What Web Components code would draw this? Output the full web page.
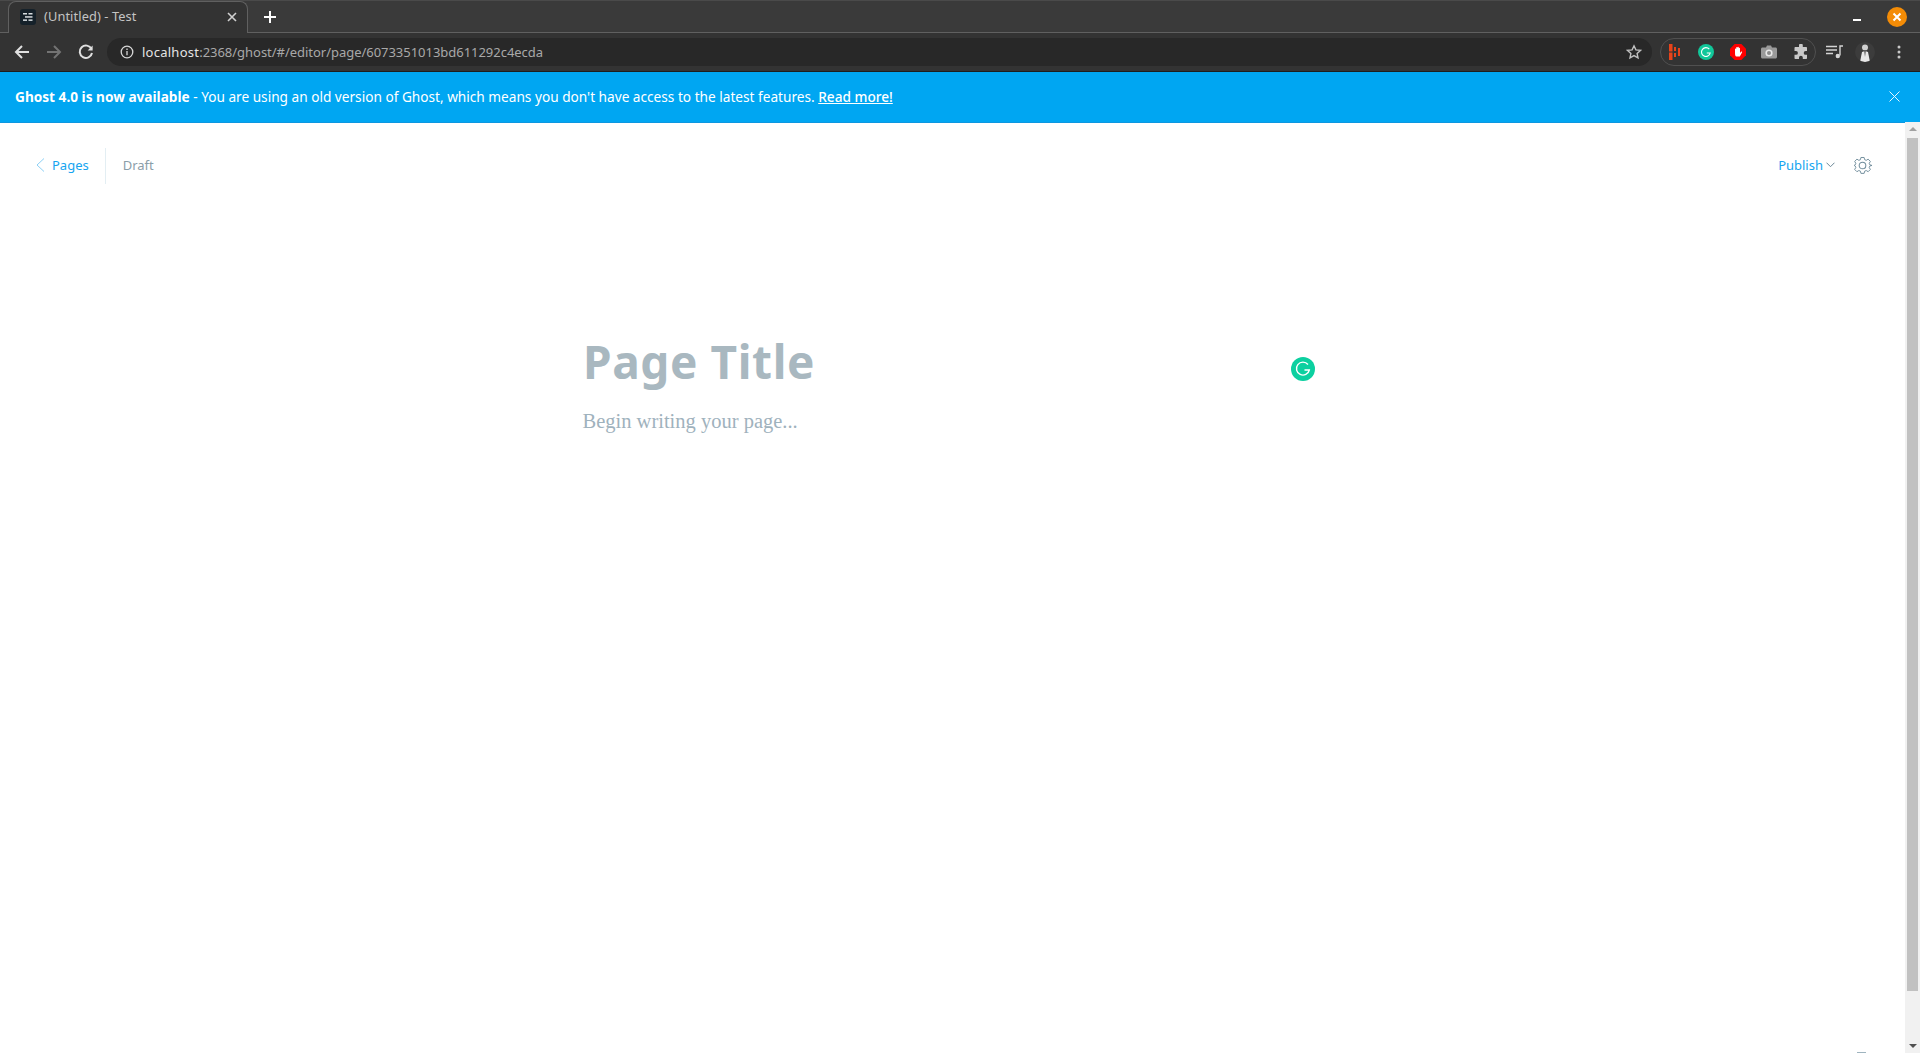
<!DOCTYPE html>
<html>
<head>
<meta charset="utf-8">
<title>(Untitled) - Test</title>
<style>
    html, body { margin: 0; height: 100%; overflow: hidden; background: #fff; }
    body { display: flex; flex-direction: column; height: 1053px; font-family: "Noto Sans", "Open Sans", sans-serif; }
    page-area { flex: 1; min-height: 0; }
</style>
</head>
<body>
<browser-tabs title-text="(Untitled) - Test"></browser-tabs>
<browser-toolbar></browser-toolbar>
<upgrade-banner>
    <strong>Ghost 4.0 is now available</strong><span> - You are using an old version of Ghost, which means you don't have access to the latest features. </span><a>Read more!</a>
</upgrade-banner>
<page-area>
    <editor-header></editor-header>
    <editor-canvas heading="Page Title" placeholder="Begin writing your page..."></editor-canvas>
</page-area>
<grammarly-badge></grammarly-badge>

<script>
class BrowserTabs extends HTMLElement {
    constructor() {
        super();
        this.attachShadow({mode: 'open'});
        this.shadowRoot.innerHTML = `
            <style>
                :host { display: flex; height: 32px; background: #3a3a3a; border-top: 1px solid #4a4a4a; color: #fff; position: relative; }
                .line { position: absolute; left: 0; right: 0; bottom: 0; height: 1px; background: #606060; }
                .tab { position: relative; z-index: 1; margin-left: 8px; width: 240px; height: 32px; box-sizing: border-box; background: #333; border: 1px solid #606060; border-bottom: none; border-radius: 8px 8px 0 0; display: flex; align-items: center; padding: 0 10px 1px 11px; gap: 8px; }
                .fav { width: 16px; height: 16px; border-radius: 3px; background: #15212a; display: grid; place-items: center; flex: none; }
                .label { flex: 1; font: 12.8px "Noto Sans", sans-serif; letter-spacing: .1px; color: #c4c4c4; white-space: nowrap; margin-top: -2px; }
                .plus { margin-left: 10px; width: 24px; height: 32px; display: grid; place-items: center; }
                .space { flex: 1; }
                .min { width: 8px; height: 2px; background: #fff; align-self: center; margin: 5px 26px 0 0; }
                .close { width: 20px; height: 20px; border-radius: 50%; background: #f48c06; align-self: center; margin-right: 13px; display: grid; place-items: center; }
            </style>
            <div class="line"></div>
            <div class="tab">
                <span class="fav"><svg width="10" height="10" viewBox="0 0 10 10" fill="#d8dde0"><rect y="1" width="4" height="1.5"/><rect x="5.5" y="1" width="4" height="1.5"/><rect x="2" y="4.2" width="7.5" height="1.5"/><rect y="7.4" width="4" height="1.5"/><rect x="5.5" y="7.4" width="4" height="1.5"/></svg></span>
                <span class="label"></span>
                <svg width="10" height="10" viewBox="0 0 10 10" stroke="#d0d0d0" stroke-width="1.6"><path d="M1 1l8 8M9 1l-8 8"/></svg>
            </div>
            <div class="plus"><svg width="12" height="12" viewBox="0 0 12 12" stroke="#fff" stroke-width="2"><path d="M6 0v12M0 6h12"/></svg></div>
            <div class="space"></div>
            <div class="min"></div>
            <div class="close"><svg width="10" height="10" viewBox="0 0 10 10" stroke="#fff" stroke-width="2"><path d="M1.5 1.5l7 7M8.5 1.5l-7 7"/></svg></div>
        `;
    }

    connectedCallback() {
        this.shadowRoot.querySelector('.label').textContent = this.getAttribute('title-text');
    }
}
customElements.define('browser-tabs', BrowserTabs);

class BrowserToolbar extends HTMLElement {
    constructor() {
        super();
        this.attachShadow({mode: 'open'});
        this.shadowRoot.innerHTML = `
            <style>
                :host { display: flex; align-items: center; height: 38px; background: #333; border-bottom: 1px solid #1e1e1e; padding-left: 13px; }
                .nav { display: flex; gap: 14px; align-items: center; }
                .nav svg { display: block; }
                .url { margin-left: 12px; width: 1545px; height: 28px; border-radius: 14px; background: #282828; display: flex; align-items: center; padding-left: 13px; box-sizing: border-box; font: 13px "Noto Sans", sans-serif; color: #a8a8a8; white-space: nowrap; }
                .url b { font-weight: 400; color: #e4e4e4; margin-left: 8px; letter-spacing: .25px; }
                .url span { letter-spacing: -.03px; }
                .star { margin-left: auto; margin-right: 10px; display: block; }
                .pill { margin-left: 8px; width: 156px; height: 28px; box-sizing: border-box; border: 1px solid #505050; border-radius: 14px; display: flex; align-items: center; justify-content: space-between; padding: 0 6px 0 7px; flex: none; }
                .pill svg { display: block; }
                .rest { display: flex; align-items: center; margin-left: 10px; }
                .avatar { width: 20px; height: 20px; border-radius: 50%; background: #3c3c3c; margin-left: 12px; overflow: hidden; display: block; }
                .dots { margin-left: 22px; display: block; }
            </style>
            <div class="nav">
                <svg width="18" height="18" viewBox="0 0 18 18" fill="none" stroke="#e0e0e0" stroke-width="2"><path d="M16 9H3M9 3L3 9l6 6"/></svg>
                <svg width="18" height="18" viewBox="0 0 18 18" fill="none" stroke="#737373" stroke-width="2"><path d="M2 9h13M9 3l6 6-6 6"/></svg>
                <svg width="18" height="18" viewBox="0 0 18 18" fill="none" stroke="#e0e0e0" stroke-width="2"><path d="M14.5 6A6.2 6.2 0 1 0 15 10"/><path d="M15.6 2.4v5h-5" fill="#e0e0e0" stroke="none"/></svg>
            </div>
            <div class="url">
                <svg width="14" height="14" viewBox="0 0 14 14" fill="none" stroke="#d8d8d8" stroke-width="1.3"><circle cx="7" cy="7" r="5.8"/><path d="M7 6v4.2M7 3.6v1.4"/></svg>
                <b>localhost</b><span>:2368/ghost/#/editor/page/6073351013bd611292c4ecda</span>
                <svg class="star" width="16" height="16" viewBox="0 0 16 16" fill="none" stroke="#c0c0c0" stroke-width="1.4"><path d="M8 1.8l1.9 4.1 4.5.5-3.3 3 .9 4.4L8 11.6l-4 2.2.9-4.4-3.3-3 4.5-.5z"/></svg>
            </div>
            <div class="pill">
                <svg width="14" height="16" viewBox="0 0 14 16" fill="#e8431a"><rect x="1" y="0" width="3.500" height="7.500"/><rect x="1" y="8.500" width="3.500" height="7.500"/><rect x="6" y="3" width="2" height="4"/><rect x="6" y="9" width="2" height="4"/><rect x="10" y="4" width="2" height="8"/></svg>
                <svg width="16" height="16" viewBox="0 0 16 16"><circle cx="8" cy="8" r="8" fill="#11c79a"/><path d="M11.3 5.2A4.4 4.4 0 1 0 12.2 9H8.8" fill="none" stroke="#fff" stroke-width="1.1"/></svg>
                <svg width="16" height="16" viewBox="0 0 16 16"><path d="M4.7 0h6.6L16 4.7v6.6L11.3 16H4.7L0 11.3V4.7z" fill="#f00"/><path d="M5 9V5.2c0-1 1.2-1 1.2 0V3.800c0-1 1.300-1 1.300 0V3.400c0-1 1.300-1 1.300 0v1c0-1 1.200-1 1.200 0V9l1-1.200c.8-.6 1.400 0 1 .7L9.800 12.500H6.400C5.400 12.500 5 11 5 9z" fill="#fff"/></svg>
                <svg width="16" height="14" viewBox="0 0 16 14"><path d="M1.500 2.500H5L6 .5h4l1 2h3.500c.8 0 1.500.7 1.500 1.500v8c0 .8-.7 1.500-1.500 1.500h-13C.7 13.500 0 12.800 0 12V4c0-.8.7-1.500 1.500-1.500z" fill="#9a9a9a"/><circle cx="8" cy="8" r="3.600" fill="#e8e8e8"/><circle cx="8" cy="8" r="2" fill="#8a8a8a"/></svg>
                <svg width="16" height="16" viewBox="0 0 16 16" fill="#c8c8c8"><path d="M6 1.500a1.900 1.900 0 0 1 3.800 0V3h3.200c.6 0 1 .4 1 1v3h-1.400a1.900 1.900 0 0 0 0 3.800H14V14c0 .6-.4 1-1 1H9.800v-1.400a1.900 1.900 0 0 0-3.800 0V15H2.500c-.6 0-1-.4-1-1v-3.200H3a1.900 1.900 0 0 0 0-3.800H1.500V4c0-.6.4-1 1-1H6z"/></svg>
            </div>
            <div class="rest">
                <svg width="17" height="14" viewBox="0 0 17 14" fill="none" stroke="#d4d4d4" stroke-width="1.4"><path d="M0 1.500h11M0 5h11M0 8.500h7M14 10.500V1h3"/><circle cx="11.800" cy="11" r="2.200" fill="#d4d4d4" stroke="none"/></svg>
                <svg class="avatar" viewBox="0 0 20 20"><circle cx="10" cy="5.500" r="3" fill="#cfcfcf"/><path d="M5 20l2-10 3-1 3 1 2 10z" fill="#e8e8e8"/><path d="M9 8l1 7 1-7z" fill="#5a5a5a"/></svg>
                <svg class="dots" width="4" height="14" viewBox="0 0 4 14" fill="#c8c8c8"><circle cx="2" cy="2" r="1.500"/><circle cx="2" cy="7" r="1.500"/><circle cx="2" cy="12" r="1.500"/></svg>
            </div>
        `;
    }
}
customElements.define('browser-toolbar', BrowserToolbar);

class UpgradeBanner extends HTMLElement {
    constructor() {
        super();
        this.attachShadow({mode: 'open'});
        this.shadowRoot.innerHTML = `
            <style>
                :host { display: flex; align-items: center; justify-content: space-between; height: 51px; box-sizing: border-box; background: #00a6f2; border-bottom: 1px solid #0d97e0; padding: 0 20px 2px 15px; color: #fff; font: 13.65px "Noto Sans", sans-serif; white-space: nowrap; }
                ::slotted(strong) { font-weight: 700; }
                ::slotted(a) { text-decoration: underline; font-weight: 500; }
                svg { display: block; }
            </style>
            <div><slot></slot></div>
            <svg width="11" height="11" viewBox="0 0 11 11" stroke="#e8f7ff" stroke-width="1" fill="none"><path d="M.5.5l10 10M10.500.5l-10 10"/></svg>
        `;
    }
}
customElements.define('upgrade-banner', UpgradeBanner);

class EditorHeader extends HTMLElement {
    constructor() {
        super();
        this.attachShadow({mode: 'open'});
        this.shadowRoot.innerHTML = `
            <style>
                :host { display: flex; align-items: center; height: 84px; padding: 0 37px 0 36px; margin-right: 11px; font: 13px "Noto Sans", sans-serif; }
                .back { display: flex; align-items: center; gap: 7px; color: #15a5f0; }
                .sep { width: 1px; height: 36px; background: #e3eef3; margin: 2px 17px 0 16px; }
                .status { color: #8b9ea9; }
                .space { flex: 1; }
                .publish { display: flex; align-items: center; gap: 3px; color: #15a5f0; margin-right: 18px; }
                svg { display: block; }
            </style>
            <div class="back">
                <svg width="9" height="14" viewBox="0 0 9 14" fill="none" stroke="#8cd0f5" stroke-width="1"><path d="M8 .5L1 7l7 6.500"/></svg>
                <span>Pages</span>
            </div>
            <div class="sep"></div>
            <div class="status">Draft</div>
            <div class="space"></div>
            <div class="publish">
                <span>Publish</span>
                <svg width="9" height="6" viewBox="0 0 9 6" fill="none" stroke="#6b8796" stroke-width="1"><path d="M.5.700l4 4 4-4"/></svg>
            </div>
            <svg width="19" height="19" viewBox="0 0 24 24" fill="none" stroke="#6f8c9b" stroke-width="1.300" stroke-linejoin="round"><circle cx="12" cy="12" r="4.200"/><path d="M9.800 1.500h4.400l.7 3 2.200.9 2.600-1.600 3.100 3.100-1.600 2.600.9 2.200 3 .7v0l-.1 0-2.900.7-.9 2.200 1.600 2.600-3.100 3.100-2.600-1.600-2.200.9-.7 3H9.800l-.7-3-2.200-.9-2.600 1.600-3.100-3.100 1.600-2.600-.9-2.200-1.400-.7v0l1.400-.7.900-2.200-1.600-2.600 3.100-3.100 2.600 1.600 2.200-.9z" transform="translate(1 .5) scale(.92)"/></svg>
        `;
    }
}
customElements.define('editor-header', EditorHeader);

class EditorCanvas extends HTMLElement {
    constructor() {
        super();
        this.attachShadow({mode: 'open'});
        this.shadowRoot.innerHTML = `
            <style>
                :host { display: flex; position: relative; flex-direction: column; padding: 125px 0 0 583px; }
                h1 { margin: 0; font: 700 46px/58px "Noto Sans", sans-serif; letter-spacing: .6px; color: #a9b8c0; }
                p { margin: 16px 0 0 -.5px; font: 20.5px/30px "Liberation Serif", serif; color: #9fb2bd; }
            </style>
            <h1></h1>
            <p></p>
        `;
    }

    connectedCallback() {
        this.shadowRoot.querySelector('h1').textContent = this.getAttribute('heading');
        this.shadowRoot.querySelector('p').textContent = this.getAttribute('placeholder');
    }
}
customElements.define('editor-canvas', EditorCanvas);

class GrammarlyBadge extends HTMLElement {
    constructor() {
        super();
        this.attachShadow({mode: 'open'});
        this.shadowRoot.innerHTML = `
            <style>
                :host { display: block; position: absolute; left: 1291px; top: 357px; width: 24px; height: 24px; }
                svg { display: block; }
                .track { position: fixed; top: 122px; right: 0; width: 15px; height: 931px; background: #f1f1f1; }
                .thumb { position: absolute; left: 2px; right: 2px; top: 16px; height: 853px; background: #c1c1c1; }
                .up, .down { position: absolute; left: 3.500px; width: 0; height: 0; border-left: 4px solid transparent; border-right: 4px solid transparent; }
                .up { top: 5px; border-bottom: 4px solid #a0a0a0; }
                .down { bottom: 5px; border-top: 4px solid #505050; }
                .peek { position: fixed; left: 1857px; top: 1052px; width: 9px; height: 1px; background: #9fb4bf; }
            </style>
            <svg width="24" height="24" viewBox="0 0 24 24"><circle cx="12" cy="12" r="12" fill="#0cd0a0"/><path d="M17 7.500A6.500 6.500 0 1 0 18.300 13H13.500" fill="none" stroke="#fff" stroke-width="1.400"/></svg>
            <div class="track"><div class="up"></div><div class="thumb"></div><div class="down"></div></div>
            <div class="peek"></div>
        `;
    }
}
customElements.define('grammarly-badge', GrammarlyBadge);
</script>
</body>
</html>
